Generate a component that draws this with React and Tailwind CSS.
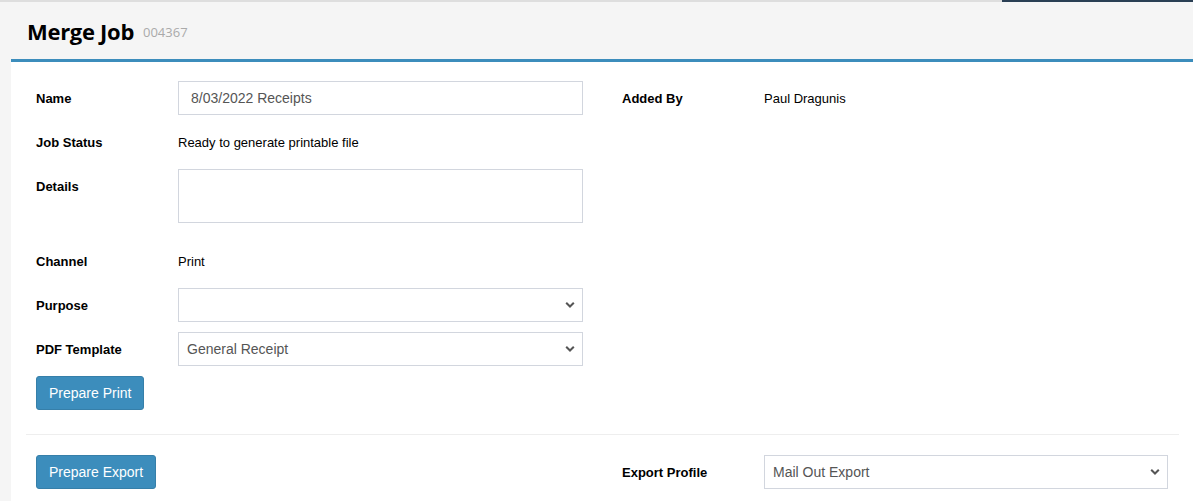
import React from "react";

function Chevron() {
  return (
    <svg width="10" height="7" viewBox="0 0 10 7" className="absolute right-[7px] top-1/2 -translate-y-1/2 pointer-events-none">
      <path d="M1.2 1.2 L5 5 L8.8 1.2" fill="none" stroke="#555" strokeWidth="2" />
    </svg>
  );
}

function SelectBox({ value, width = "w-[405px]" }) {
  return (
    <div className={`relative ${width} h-[34px] border border-[#d2d6de] bg-white flex items-center pl-[8px] text-[14px] text-[#555]`}>
      <span>{value}</span>
      <Chevron />
    </div>
  );
}

function Label({ children }) {
  return <div className="w-[142px] shrink-0 pt-[2px] font-bold text-[13px] text-black">{children}</div>;
}

function Button({ children }) {
  return (
    <button className="h-[34px] px-[12px] bg-[#3c8dbc] border border-[#367fa9] rounded-[3px] text-white text-[14px]">
      {children}
    </button>
  );
}

export default function App() {
  return (
    <div className="w-[1193px] h-[501px] overflow-hidden bg-[#f5f5f5] font-['Liberation_Sans',Arial,sans-serif] text-[13px] text-black">
      <div className="flex h-[2px]">
        <div className="w-[1002px] bg-[#dedede]"></div>
        <div className="flex-1 bg-[#2a3f54]"></div>
      </div>
      <div className="h-[57px] flex items-center pl-[27px] gap-[9px]">
        <h1 className="font-['Open_Sans',sans-serif] font-bold text-[22px] leading-none tracking-[-0.3px] text-black">Merge Job</h1>
        <span className="font-['Open_Sans',sans-serif] text-[13px] text-[#aaa] mt-[5px]">004367</span>
      </div>
      <div className="ml-[11px] bg-white border-t-[3px] border-[#3c8dbc] pt-[19px] pl-[15px] pr-[14px] h-[460px]">
        <div className="flex">
          <div className="w-[596px] pl-[10px] flex flex-col">
            <div className="flex items-center h-[34px]">
              <Label>Name</Label>
              <div className="w-[405px] h-[34px] border border-[#d2d6de] flex items-center px-[12px] text-[14px] text-[#555]">8/03/2022 Receipts</div>
            </div>
            <div className="flex items-center h-[34px] mt-[10px]">
              <Label>Job Status</Label>
              <div className="pt-[2px]">Ready to generate printable file</div>
            </div>
            <div className="flex mt-[10px]">
              <div className="w-[142px] shrink-0 h-[34px] pt-[2px] flex items-center font-bold">Details</div>
              <div className="w-[405px] h-[54px] border border-[#d2d6de]"></div>
            </div>
            <div className="flex items-center h-[34px] mt-[21px]">
              <Label>Channel</Label>
              <div className="pt-[2px]">Print</div>
            </div>
            <div className="flex items-center h-[34px] mt-[10px]">
              <Label>Purpose</Label>
              <SelectBox value="" />
            </div>
            <div className="flex items-center h-[34px] mt-[10px]">
              <Label>PDF Template</Label>
              <SelectBox value="General Receipt" />
            </div>
            <div className="mt-[10px]">
              <Button>Prepare Print</Button>
            </div>
          </div>
          <div className="flex-1 flex flex-col">
            <div className="flex items-center h-[34px]">
              <Label>Added By</Label>
              <div className="pt-[2px]">Paul Dragunis</div>
            </div>
          </div>
        </div>
        <div className="mt-[24px] border-t border-[#eeeeee]"></div>
        <div className="flex mt-[20px]">
          <div className="w-[596px] pl-[10px]">
            <Button>Prepare Export</Button>
          </div>
          <div className="flex items-center h-[34px]">
            <Label>Export Profile</Label>
            <SelectBox value="Mail Out Export" width="w-[404px]" />
          </div>
        </div>
      </div>
    </div>
  );
}
